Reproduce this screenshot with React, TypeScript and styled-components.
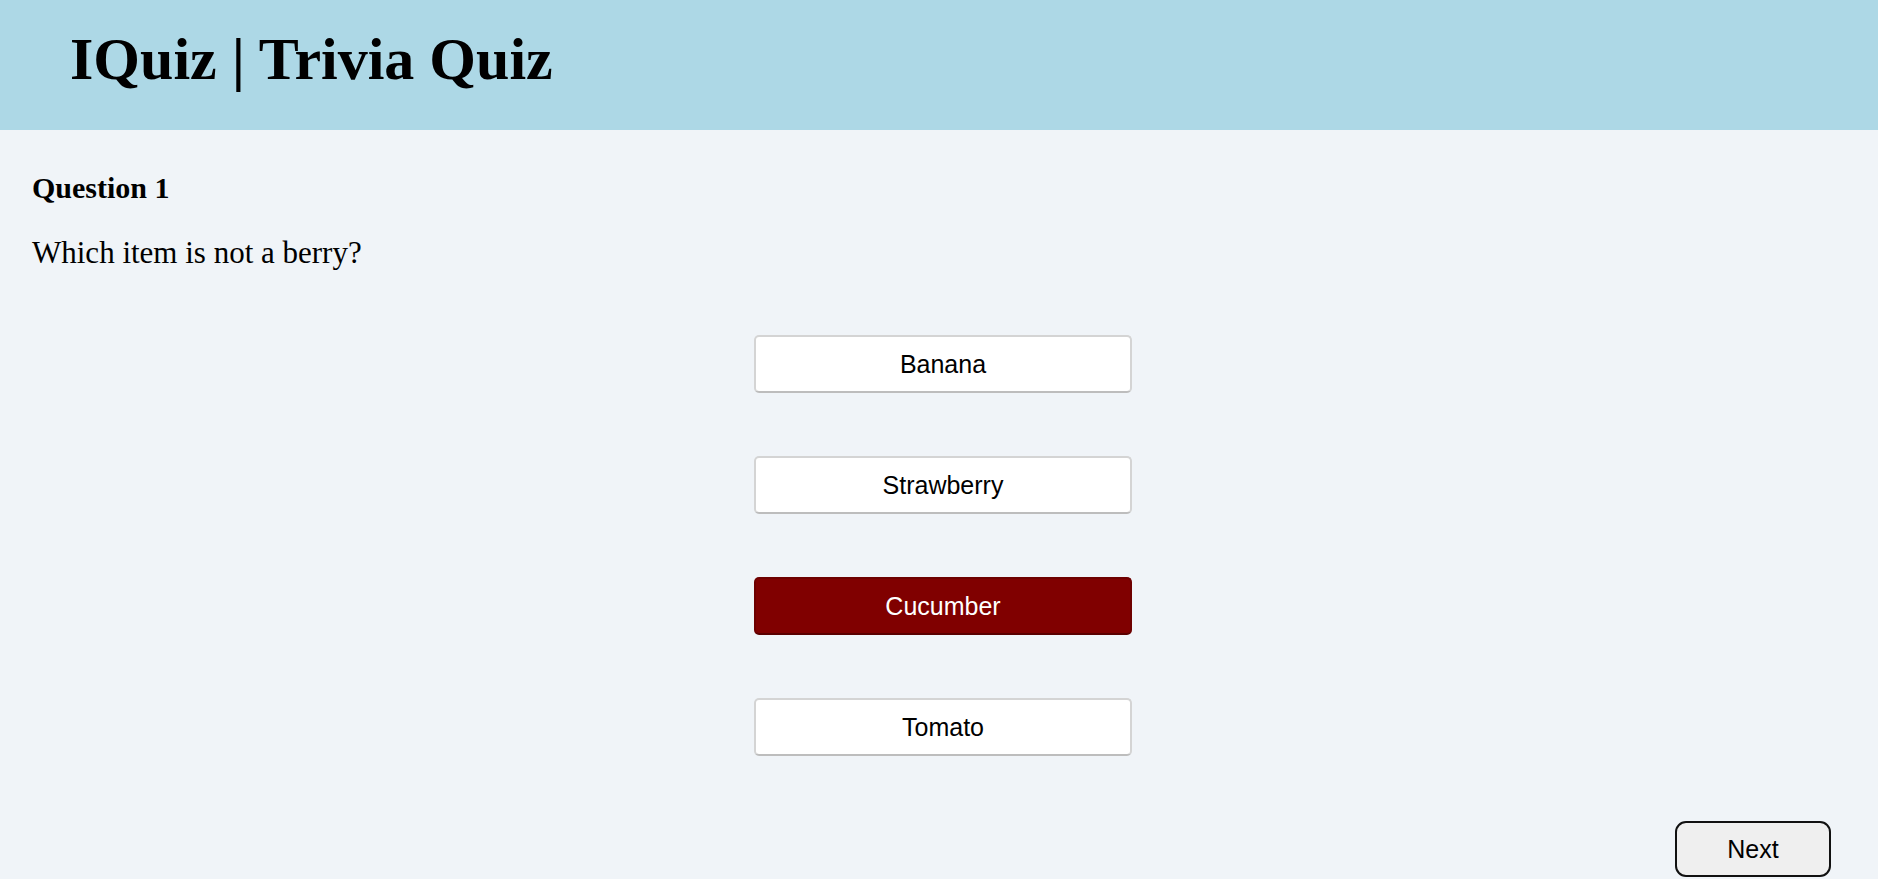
import React, { useState } from "react";
import styled, { createGlobalStyle } from "styled-components";

const GlobalStyle = createGlobalStyle`
  html, body {
    margin: 0;
    padding: 0;
    background: #f0f4f8;
    font-family: "Liberation Serif", "Times New Roman", serif;
    color: #000;
  }
  * { box-sizing: border-box; }
`;

const Page = styled.div`
  min-height: 100vh;
  background: #f0f4f8;
`;

const Header = styled.header`
  height: 130px;
  background: #add8e6;
  padding: 25px 0 0 70px;
`;

const Title = styled.h1`
  margin: 0;
  font-family: "Liberation Serif", "Times New Roman", serif;
  font-size: 60px;
  font-weight: 700;
  line-height: normal;
`;

const Main = styled.main`
  padding: 41px 24px 0 32px;
`;

const QuestionLabel = styled.h3`
  margin: 0;
  font-size: 30px;
  font-weight: 700;
  line-height: normal;
`;

const QuestionText = styled.p`
  margin: 30px 0 0;
  font-size: 31px;
  line-height: normal;
`;

const Options = styled.div`
  margin-top: 64px;
  display: flex;
  flex-direction: column;
  align-items: center;
  gap: 63px;
`;

const OptionButton = styled.button<{ $selected?: boolean }>`
  width: 378px;
  height: 58px;
  border-radius: 5px;
  border: 2px solid ${(p) => (p.$selected ? "#6e0000" : "#d4d4d4")};
  border-bottom-color: ${(p) => (p.$selected ? "#5a0000" : "#bdbdbd")};
  background: ${(p) => (p.$selected ? "#800000" : "#ffffff")};
  color: ${(p) => (p.$selected ? "#ffffff" : "#000000")};
  font-family: "Liberation Sans", Arial, sans-serif;
  font-size: 25px;
  cursor: pointer;
  padding: 0;
`;

const Footer = styled.div`
  display: flex;
  justify-content: flex-end;
  margin-top: 65px;
  padding-right: 23px;
`;

const NextButton = styled.button`
  width: 156px;
  height: 56px;
  border: 2px solid #111;
  border-radius: 11px;
  background: #efefef;
  color: #000;
  font-family: "Liberation Sans", Arial, sans-serif;
  font-size: 25px;
  cursor: pointer;
  padding: 0;
`;

const options = ["Banana", "Strawberry", "Cucumber", "Tomato"];

export default function App() {
  const [selected, setSelected] = useState("Cucumber");
  return (
    <Page>
      <GlobalStyle />
      <Header>
        <Title>IQuiz | Trivia Quiz</Title>
      </Header>
      <Main>
        <QuestionLabel>Question 1</QuestionLabel>
        <QuestionText>Which item is not a berry?</QuestionText>
        <Options>
          {options.map((o) => (
            <OptionButton key={o} $selected={o === selected} onClick={() => setSelected(o)}>
              {o}
            </OptionButton>
          ))}
        </Options>
        <Footer>
          <NextButton>Next</NextButton>
        </Footer>
      </Main>
    </Page>
  );
}
